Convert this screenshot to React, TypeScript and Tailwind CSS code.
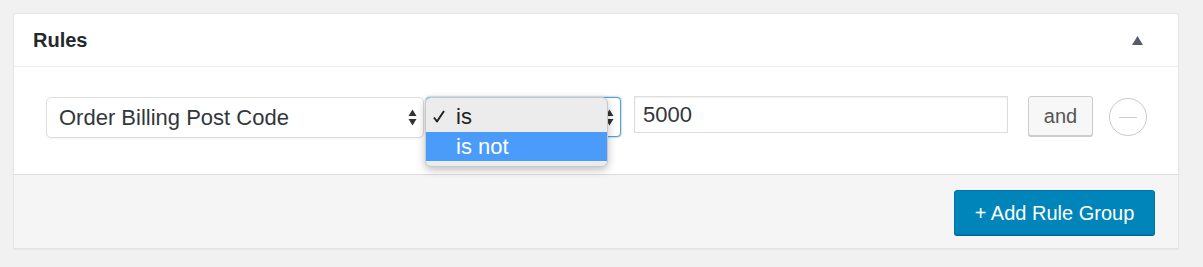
import React from "react";

function Arrows() {
  return (
    <svg width="9" height="17" viewBox="0 0 9 17" className="shrink-0">
      <path d="M4.5 0.5 L8.5 7 L0.5 7 Z" fill="#333" />
      <path d="M0.5 10 L8.5 10 L4.5 16.5 Z" fill="#333" />
    </svg>
  );
}

export default function App() {
  return (
    <div
      className="min-h-[267px] w-[1203px] bg-[#f1f1f1] pt-[13px] pl-[13px]"
      style={{ fontFamily: '"Liberation Sans", Arial, sans-serif' }}
    >
      <div className="w-[1166px] border border-[#e5e5e5] bg-white shadow-[0_1px_1px_rgba(0,0,0,0.04)]">
        {/* header */}
        <div className="flex h-[53px] items-center justify-between border-b border-[#eeeeee] pl-[19px] pr-[35px]">
          <span className="text-[20px] font-bold leading-none text-[#23282d]">Rules</span>
          <svg width="11" height="9" viewBox="0 0 11 9">
            <path d="M5.5 0 L11 9 L0 9 Z" fill="#555d66" />
          </svg>
        </div>
        {/* body */}
        <div className="flex h-[107px] items-start pl-[32px] pt-[29px]">
          <div className="mt-[1px] flex h-[41px] w-[378px] items-center justify-between rounded-[5px] border border-[#dddddd] bg-white pl-[12px] pr-[6px] shadow-[0_1px_1px_rgba(0,0,0,0.04)]">
            <span className="text-[22px] leading-none text-[#32373c]">Order Billing Post Code</span>
            <Arrows />
          </div>
          <div className="relative ml-[2px] mt-[1px] flex h-[40px] w-[195px] items-center justify-between rounded-[4px] border border-[#5b9dd9] bg-white pl-[12px] pr-[6px] shadow-[0_0_2px_rgba(30,140,190,0.8)]">
            <span className="text-[22px] leading-none text-[#32373c]">is</span>
            <Arrows />
            <div className="absolute left-[-2px] top-[-1px] flex h-[70px] w-[183px] flex-col overflow-hidden rounded-[6px] border border-[#c8c8c8] bg-[#ececec] shadow-[0_3px_8px_rgba(0,0,0,0.25)]">
              <div className="flex h-[34px] items-center pt-[3px]">
                <div className="flex w-[30px] shrink-0 pl-[7px]">
                  <svg width="12" height="13" viewBox="0 0 12 13">
                    <path d="M1 7.5 L4 11.5 L11 1" fill="none" stroke="#222" strokeWidth="2" strokeLinejoin="round" />
                  </svg>
                </div>
                <span className="text-[22px] leading-none text-[#222]">is</span>
              </div>
              <div className="flex h-[29px] items-center bg-[#4a9bfa] pl-[30px]">
                <span className="text-[22px] leading-none text-white">is not</span>
              </div>
            </div>
          </div>
          <div className="ml-[13px] flex h-[37px] w-[374px] items-center border border-[#dddddd] bg-white pl-[8px] shadow-[inset_0_1px_2px_rgba(0,0,0,0.07)]">
            <span className="text-[22px] leading-none text-[#32373c]">5000</span>
          </div>
          <div className="ml-[20px] flex h-[40px] w-[65px] items-center justify-center rounded-[3px] border border-[#cccccc] bg-[#f7f7f7] shadow-[0_1px_0_#cccccc]">
            <span className="text-[20px] leading-none text-[#555555]">and</span>
          </div>
          <div className="ml-[16px] mt-[2px] flex h-[38px] w-[38px] items-center justify-center rounded-full border border-[#cccccc] bg-white">
            <div className="h-[1px] w-[18px] bg-[#cccccc]" />
          </div>
        </div>
        {/* footer */}
        <div className="flex h-[74px] justify-end border-t border-[#dddddd] bg-[#f5f5f5] pr-[23px] pt-[15px]">
          <div className="flex h-[45px] w-[201px] items-center justify-center rounded-[3px] border border-[#0073aa] bg-[#0085ba] shadow-[0_1px_0_#006799]">
            <span className="text-[20px] leading-none text-white">+ Add Rule Group</span>
          </div>
        </div>
      </div>
    </div>
  );
}
